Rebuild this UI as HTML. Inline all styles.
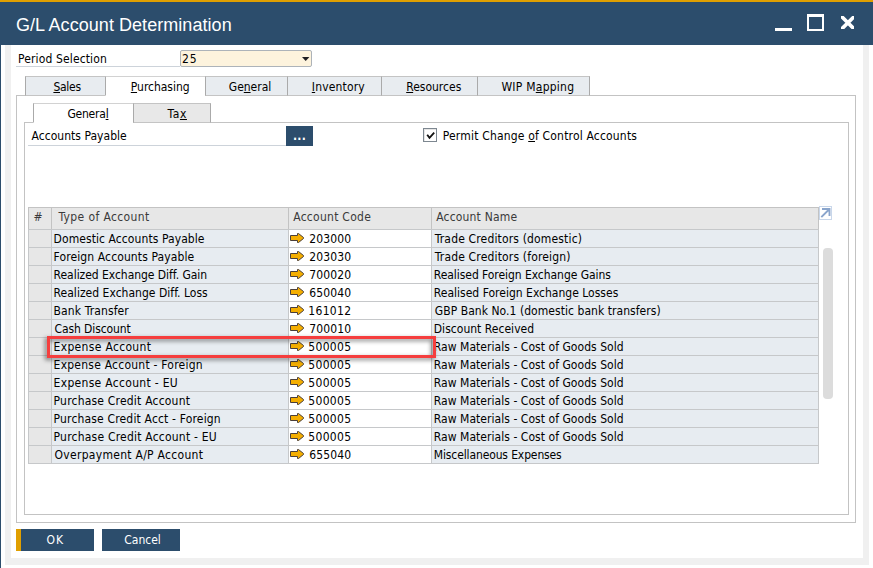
<!DOCTYPE html>
<html lang="en"><head><meta charset="utf-8"><title>G/L Account Determination</title>
<style>
*{box-sizing:border-box}
html,body{margin:0;padding:0}
body{width:873px;height:568px;background:#fff;position:relative;overflow:hidden;font-family:"DejaVu Sans Condensed","Liberation Sans",sans-serif;font-size:12px;color:#000;line-height:14px}
.abs{position:absolute}
.t{position:absolute;white-space:nowrap;line-height:14px;height:14px}
.t.ttl{font-family:"Liberation Sans",sans-serif;font-size:18px;line-height:22px;height:22px;color:#fff}
.t.w{color:#fff}
.t.h{color:#3a3a3a}
.t.bold{font-weight:bold}
u{text-decoration:underline;text-underline-offset:1px}

#gold{left:0;top:0;width:873px;height:2px;background:#e09f00}
#title{left:0;top:2px;width:873px;height:43px;background:#2c4d6c}
#lb{left:0;top:45px;width:1px;height:523px;background:#2c4d6c}
.fr{background:#f0f0f0}
.tab{position:absolute;height:20px;border:1px solid;border-color:#c4c4c4 #aaa #c4c4c4 #aaa;background:#e8ecf0}
.tab.act{background:#fff;border-bottom-color:#fff;border-top-color:#d2d2d2;height:20px}
.tab2{position:absolute;height:20px;border:1px solid;border-color:#c4c4c4 #aaa #c4c4c4 #aaa;background:#e8e8e8}
.tab2.act{background:#fff;border-bottom-color:#fff;border-top-color:#d2d2d2;height:20px}
.panel{position:absolute;border:1px solid #c3c3c3;background:#fff}
.btn{position:absolute;height:22px;background:#2c4d6c}
.hdr{position:absolute;top:207px;height:23px;background:#e7e7e7;border:1px solid #c3c3c3}
.row{position:absolute;left:28px;width:791px;height:19px}
.row>div{position:absolute;top:0;height:19px;border:1px solid #c6c8ca}
.c0{left:0;width:24px;background:#e7e7e7}
.c1{left:23px;width:238px;background:#e7ecf1}
.c2{left:260px;width:144px;background:#fff}
.c3{left:403px;width:388px;background:#e7ecf1}
.arw{position:absolute;left:1px;top:3px}
</style></head><body>
<div id="gold" class="abs"></div>
<div id="title" class="abs">
  <div class="abs" style="left:775px;top:26px;width:17px;height:3px;background:#fff"></div>
  <div class="abs" style="left:807px;top:12px;width:17px;height:17px;border:2px solid #fff;border-top-width:3px"></div>
  <svg class="abs" style="left:840.6px;top:13.6px;overflow:hidden" width="13.8" height="13.6" viewBox="0 0 13.8 13.6"><path d="M-2 -2 L15.8 15.6 M15.8 -2 L-2 15.6" stroke="#fff" stroke-width="3.7" fill="none"/></svg>
</div>
<div id="lb" class="abs"></div>
<div class="abs fr" style="left:5px;top:45px;width:6px;height:520px"></div>
<div class="abs fr" style="left:863px;top:45px;width:6px;height:520px"></div>
<div class="abs fr" style="left:5px;top:558px;width:864px;height:7px"></div>

<div class="abs" style="left:16px;top:66px;width:164px;height:1px;background:#cdd3da"></div>
<div class="abs" style="left:180px;top:50px;width:132px;height:17px;background:#fdf3dd;border:1px solid #adb3b9;border-radius:2px"></div>
<svg class="abs" style="left:301.7px;top:57px" width="8" height="5" viewBox="0 0 8 5"><path d="M0 0 H7.4 L3.7 4.1 Z" fill="#1e1e22"/></svg>

<div class="panel" style="left:16px;top:95px;width:840px;height:428px"></div>
<div class="tab" style="left:25px;top:76px;width:81px"></div>
<div class="tab act" style="left:105px;top:76px;width:101px"></div>
<div class="tab" style="left:205px;top:76px;width:83px"></div>
<div class="tab" style="left:287px;top:76px;width:95px"></div>
<div class="tab" style="left:381px;top:76px;width:97px"></div>
<div class="tab" style="left:477px;top:76px;width:113px"></div>

<div class="panel" style="left:24px;top:122px;width:825px;height:393px"></div>
<div class="tab2 act" style="left:33px;top:103px;width:101px"></div>
<div class="tab2" style="left:133px;top:103px;width:78px"></div>

<div class="abs" style="left:28px;top:145px;width:258px;height:1px;background:#cdd3da"></div>
<div class="btn" style="left:286px;top:126px;width:27px;height:20px"></div>

<div class="abs" style="left:423px;top:128px;width:14px;height:14px;border:1px solid #7d8790;background:#fff;box-shadow:inset 1px 1px 0 #e6e6e6"></div>
<svg class="abs" style="left:423px;top:128px" width="14" height="14" viewBox="0 0 14 14"><path d="M4.2 6.7 L6.5 9.9 L11.2 4.6" stroke="#111" stroke-width="1.8" fill="none"/></svg>

<div class="hdr" style="left:28px;width:24px"></div>
<div class="hdr" style="left:51px;width:238px"></div>
<div class="hdr" style="left:288px;width:144px"></div>
<div class="hdr" style="left:431px;width:388px"></div>
<div class="row" style="top:229px"><div class="c0"></div><div class="c1"></div><div class="c2"><svg class="arw" width="15" height="10" viewBox="0 0 15 10"><path d="M0.5 2.5 H7.5 V0.5 H8.5 L13.5 4.5 V5.5 L8.5 9.5 H7.5 V7.5 H0.5 Z" fill="#f4ae00" stroke="#4a3f3a" stroke-width="1" stroke-linejoin="miter"/></svg></div><div class="c3"></div></div>
<div class="row" style="top:247px"><div class="c0"></div><div class="c1"></div><div class="c2"><svg class="arw" width="15" height="10" viewBox="0 0 15 10"><path d="M0.5 2.5 H7.5 V0.5 H8.5 L13.5 4.5 V5.5 L8.5 9.5 H7.5 V7.5 H0.5 Z" fill="#f4ae00" stroke="#4a3f3a" stroke-width="1" stroke-linejoin="miter"/></svg></div><div class="c3"></div></div>
<div class="row" style="top:265px"><div class="c0"></div><div class="c1"></div><div class="c2"><svg class="arw" width="15" height="10" viewBox="0 0 15 10"><path d="M0.5 2.5 H7.5 V0.5 H8.5 L13.5 4.5 V5.5 L8.5 9.5 H7.5 V7.5 H0.5 Z" fill="#f4ae00" stroke="#4a3f3a" stroke-width="1" stroke-linejoin="miter"/></svg></div><div class="c3"></div></div>
<div class="row" style="top:283px"><div class="c0"></div><div class="c1"></div><div class="c2"><svg class="arw" width="15" height="10" viewBox="0 0 15 10"><path d="M0.5 2.5 H7.5 V0.5 H8.5 L13.5 4.5 V5.5 L8.5 9.5 H7.5 V7.5 H0.5 Z" fill="#f4ae00" stroke="#4a3f3a" stroke-width="1" stroke-linejoin="miter"/></svg></div><div class="c3"></div></div>
<div class="row" style="top:301px"><div class="c0"></div><div class="c1"></div><div class="c2"><svg class="arw" width="15" height="10" viewBox="0 0 15 10"><path d="M0.5 2.5 H7.5 V0.5 H8.5 L13.5 4.5 V5.5 L8.5 9.5 H7.5 V7.5 H0.5 Z" fill="#f4ae00" stroke="#4a3f3a" stroke-width="1" stroke-linejoin="miter"/></svg></div><div class="c3"></div></div>
<div class="row" style="top:319px"><div class="c0"></div><div class="c1"></div><div class="c2"><svg class="arw" width="15" height="10" viewBox="0 0 15 10"><path d="M0.5 2.5 H7.5 V0.5 H8.5 L13.5 4.5 V5.5 L8.5 9.5 H7.5 V7.5 H0.5 Z" fill="#f4ae00" stroke="#4a3f3a" stroke-width="1" stroke-linejoin="miter"/></svg></div><div class="c3"></div></div>
<div class="row" style="top:337px"><div class="c0"></div><div class="c1"></div><div class="c2"><svg class="arw" width="15" height="10" viewBox="0 0 15 10"><path d="M0.5 2.5 H7.5 V0.5 H8.5 L13.5 4.5 V5.5 L8.5 9.5 H7.5 V7.5 H0.5 Z" fill="#f4ae00" stroke="#4a3f3a" stroke-width="1" stroke-linejoin="miter"/></svg></div><div class="c3"></div></div>
<div class="row" style="top:355px"><div class="c0"></div><div class="c1"></div><div class="c2"><svg class="arw" width="15" height="10" viewBox="0 0 15 10"><path d="M0.5 2.5 H7.5 V0.5 H8.5 L13.5 4.5 V5.5 L8.5 9.5 H7.5 V7.5 H0.5 Z" fill="#f4ae00" stroke="#4a3f3a" stroke-width="1" stroke-linejoin="miter"/></svg></div><div class="c3"></div></div>
<div class="row" style="top:373px"><div class="c0"></div><div class="c1"></div><div class="c2"><svg class="arw" width="15" height="10" viewBox="0 0 15 10"><path d="M0.5 2.5 H7.5 V0.5 H8.5 L13.5 4.5 V5.5 L8.5 9.5 H7.5 V7.5 H0.5 Z" fill="#f4ae00" stroke="#4a3f3a" stroke-width="1" stroke-linejoin="miter"/></svg></div><div class="c3"></div></div>
<div class="row" style="top:391px"><div class="c0"></div><div class="c1"></div><div class="c2"><svg class="arw" width="15" height="10" viewBox="0 0 15 10"><path d="M0.5 2.5 H7.5 V0.5 H8.5 L13.5 4.5 V5.5 L8.5 9.5 H7.5 V7.5 H0.5 Z" fill="#f4ae00" stroke="#4a3f3a" stroke-width="1" stroke-linejoin="miter"/></svg></div><div class="c3"></div></div>
<div class="row" style="top:409px"><div class="c0"></div><div class="c1"></div><div class="c2"><svg class="arw" width="15" height="10" viewBox="0 0 15 10"><path d="M0.5 2.5 H7.5 V0.5 H8.5 L13.5 4.5 V5.5 L8.5 9.5 H7.5 V7.5 H0.5 Z" fill="#f4ae00" stroke="#4a3f3a" stroke-width="1" stroke-linejoin="miter"/></svg></div><div class="c3"></div></div>
<div class="row" style="top:427px"><div class="c0"></div><div class="c1"></div><div class="c2"><svg class="arw" width="15" height="10" viewBox="0 0 15 10"><path d="M0.5 2.5 H7.5 V0.5 H8.5 L13.5 4.5 V5.5 L8.5 9.5 H7.5 V7.5 H0.5 Z" fill="#f4ae00" stroke="#4a3f3a" stroke-width="1" stroke-linejoin="miter"/></svg></div><div class="c3"></div></div>
<div class="row" style="top:445px"><div class="c0"></div><div class="c1"></div><div class="c2"><svg class="arw" width="15" height="10" viewBox="0 0 15 10"><path d="M0.5 2.5 H7.5 V0.5 H8.5 L13.5 4.5 V5.5 L8.5 9.5 H7.5 V7.5 H0.5 Z" fill="#f4ae00" stroke="#4a3f3a" stroke-width="1" stroke-linejoin="miter"/></svg></div><div class="c3"></div></div>

<div class="abs" style="left:819px;top:206px;width:13px;height:14px;border:1px solid #c9d7ea;background:#fff"></div>
<svg class="abs" style="left:819px;top:206px" width="13" height="14" viewBox="0 0 13 14"><path d="M2.3 11.2 L10 3.5 M3 3 H10.5 V10" stroke="#8aa5cc" stroke-width="1.9" fill="none"/></svg>
<div class="abs" style="left:823px;top:248px;width:10px;height:151px;background:#dcdcdc;border-radius:4px"></div>

<div class="btn" style="left:16px;top:529px;width:78px;border-left:5px solid #e09f00"></div>
<div class="btn" style="left:102px;top:529px;width:78px"></div>

<div class="t ttl" id="t0" style="left:16.00px;top:14.00px;letter-spacing:0.050px">G/L Account Determination</div>
<div class="t b" id="t1" style="left:18.00px;top:52.00px;letter-spacing:0.133px">Period Selection</div>
<div class="t b" id="t2" style="left:182.00px;top:52.00px;letter-spacing:0.900px">25</div>
<div class="t b" id="t3" style="left:53.40px;top:80.00px;letter-spacing:-0.250px"><u>S</u>ales</div>
<div class="t b" id="t4" style="left:130.79px;top:80.00px;letter-spacing:-0.022px"><u>P</u>urchasing</div>
<div class="t b" id="t5" style="left:228.79px;top:80.00px;letter-spacing:-0.017px">Ge<u>n</u>eral</div>
<div class="t b" id="t6" style="left:311.79px;top:80.00px;letter-spacing:0.175px"><u>I</u>nventory</div>
<div class="t b" id="t7" style="left:406.19px;top:80.00px;letter-spacing:0.000px"><u>R</u>esources</div>
<div class="t b" id="t8" style="left:501.40px;top:80.00px;letter-spacing:0.250px">WIP M<u>a</u>pping</div>
<div class="t b" id="t9" style="left:67.40px;top:107.00px;letter-spacing:-0.217px">Genera<u>l</u></div>
<div class="t b" id="t10" style="left:167.40px;top:107.00px;letter-spacing:0.650px">Ta<u>x</u></div>
<div class="t b" id="t11" style="left:31.59px;top:129.00px;letter-spacing:0.027px">Accounts Payable</div>
<div class="t w bold" id="t12" style="left:293.00px;top:129.00px;letter-spacing:0.250px">...</div>
<div class="t b" id="t13" style="left:442.79px;top:129.00px;letter-spacing:0.181px">Permit Change <u>o</u>f Control Accounts</div>
<div class="t h" id="t14" style="left:33.40px;top:210.00px;letter-spacing:0.000px">#</div>
<div class="t h" id="t15" style="left:58.40px;top:210.00px;letter-spacing:0.393px">Type of Account</div>
<div class="t h" id="t16" style="left:293.19px;top:210.00px;letter-spacing:0.273px">Account Code</div>
<div class="t h" id="t17" style="left:436.19px;top:210.00px;letter-spacing:0.182px">Account Name</div>
<div class="t b" id="t18" style="left:53.59px;top:232.00px;letter-spacing:0.079px">Domestic Accounts Payable</div>
<div class="t b" id="t19" style="left:309.19px;top:232.00px;letter-spacing:0.160px">203000</div>
<div class="t b" id="t20" style="left:434.79px;top:232.00px;letter-spacing:0.160px">Trade Creditors (domestic)</div>
<div class="t b" id="t21" style="left:53.59px;top:250.00px;letter-spacing:0.113px">Foreign Accounts Payable</div>
<div class="t b" id="t22" style="left:309.19px;top:250.00px;letter-spacing:0.160px">203030</div>
<div class="t b" id="t23" style="left:434.79px;top:250.00px;letter-spacing:0.167px">Trade Creditors (foreign)</div>
<div class="t b" id="t24" style="left:53.59px;top:268.00px;letter-spacing:-0.041px">Realized Exchange Diff. Gain</div>
<div class="t b" id="t25" style="left:309.19px;top:268.00px;letter-spacing:0.160px">700020</div>
<div class="t b" id="t26" style="left:433.79px;top:268.00px;letter-spacing:-0.053px">Realised Foreign Exchange Gains</div>
<div class="t b" id="t27" style="left:53.59px;top:286.00px;letter-spacing:0.022px">Realized Exchange Diff. Loss</div>
<div class="t b" id="t28" style="left:309.19px;top:286.00px;letter-spacing:0.160px">650040</div>
<div class="t b" id="t29" style="left:433.79px;top:286.00px;letter-spacing:0.010px">Realised Foreign Exchange Losses</div>
<div class="t b" id="t30" style="left:53.59px;top:304.00px;letter-spacing:0.117px">Bank Transfer</div>
<div class="t b" id="t31" style="left:308.19px;top:304.00px;letter-spacing:0.360px">161012</div>
<div class="t b" id="t32" style="left:434.79px;top:304.00px;letter-spacing:0.050px">GBP Bank No.1 (domestic bank transfers)</div>
<div class="t b" id="t33" style="left:54.59px;top:322.00px;letter-spacing:-0.117px">Cash Discount</div>
<div class="t b" id="t34" style="left:309.19px;top:322.00px;letter-spacing:0.160px">700010</div>
<div class="t b" id="t35" style="left:433.79px;top:322.00px;letter-spacing:0.025px">Discount Received</div>
<div class="t b" id="t36" style="left:53.59px;top:340.00px;letter-spacing:0.321px">Expense Account</div>
<div class="t b" id="t37" style="left:308.19px;top:340.00px;letter-spacing:0.360px">500005</div>
<div class="t b" id="t38" style="left:433.79px;top:340.00px;letter-spacing:0.045px">Raw Materials - Cost of Goods Sold</div>
<div class="t b" id="t39" style="left:53.59px;top:358.00px;letter-spacing:0.233px">Expense Account - Foreign</div>
<div class="t b" id="t40" style="left:308.19px;top:358.00px;letter-spacing:0.360px">500005</div>
<div class="t b" id="t41" style="left:433.79px;top:358.00px;letter-spacing:0.045px">Raw Materials - Cost of Goods Sold</div>
<div class="t b" id="t42" style="left:53.59px;top:376.00px;letter-spacing:0.311px">Expense Account - EU</div>
<div class="t b" id="t43" style="left:308.19px;top:376.00px;letter-spacing:0.360px">500005</div>
<div class="t b" id="t44" style="left:433.79px;top:376.00px;letter-spacing:0.045px">Raw Materials - Cost of Goods Sold</div>
<div class="t b" id="t45" style="left:53.59px;top:394.00px;letter-spacing:0.205px">Purchase Credit Account</div>
<div class="t b" id="t46" style="left:308.19px;top:394.00px;letter-spacing:0.360px">500005</div>
<div class="t b" id="t47" style="left:433.79px;top:394.00px;letter-spacing:0.045px">Raw Materials - Cost of Goods Sold</div>
<div class="t b" id="t48" style="left:53.59px;top:412.00px;letter-spacing:0.169px">Purchase Credit Acct - Foreign</div>
<div class="t b" id="t49" style="left:308.19px;top:412.00px;letter-spacing:0.360px">500005</div>
<div class="t b" id="t50" style="left:433.79px;top:412.00px;letter-spacing:0.045px">Raw Materials - Cost of Goods Sold</div>
<div class="t b" id="t51" style="left:53.59px;top:430.00px;letter-spacing:0.215px">Purchase Credit Account - EU</div>
<div class="t b" id="t52" style="left:308.19px;top:430.00px;letter-spacing:0.360px">500005</div>
<div class="t b" id="t53" style="left:433.79px;top:430.00px;letter-spacing:0.045px">Raw Materials - Cost of Goods Sold</div>
<div class="t b" id="t54" style="left:54.59px;top:448.00px;letter-spacing:0.286px">Overpayment A/P Account</div>
<div class="t b" id="t55" style="left:309.19px;top:448.00px;letter-spacing:0.160px">655040</div>
<div class="t b" id="t56" style="left:433.79px;top:448.00px;letter-spacing:-0.124px">Miscellaneous Expenses</div>
<div class="t w" id="t57" style="left:46.59px;top:533.00px;letter-spacing:0.900px">OK</div>
<div class="t w" id="t58" style="left:124.19px;top:533.00px;letter-spacing:0.020px">Cancel</div>

<div class="abs" style="left:47px;top:336px;width:389px;height:22px;border:3px solid #f53e3e;filter:drop-shadow(-2px 2px 2px rgba(0,0,0,.5))"></div>
</body></html>
